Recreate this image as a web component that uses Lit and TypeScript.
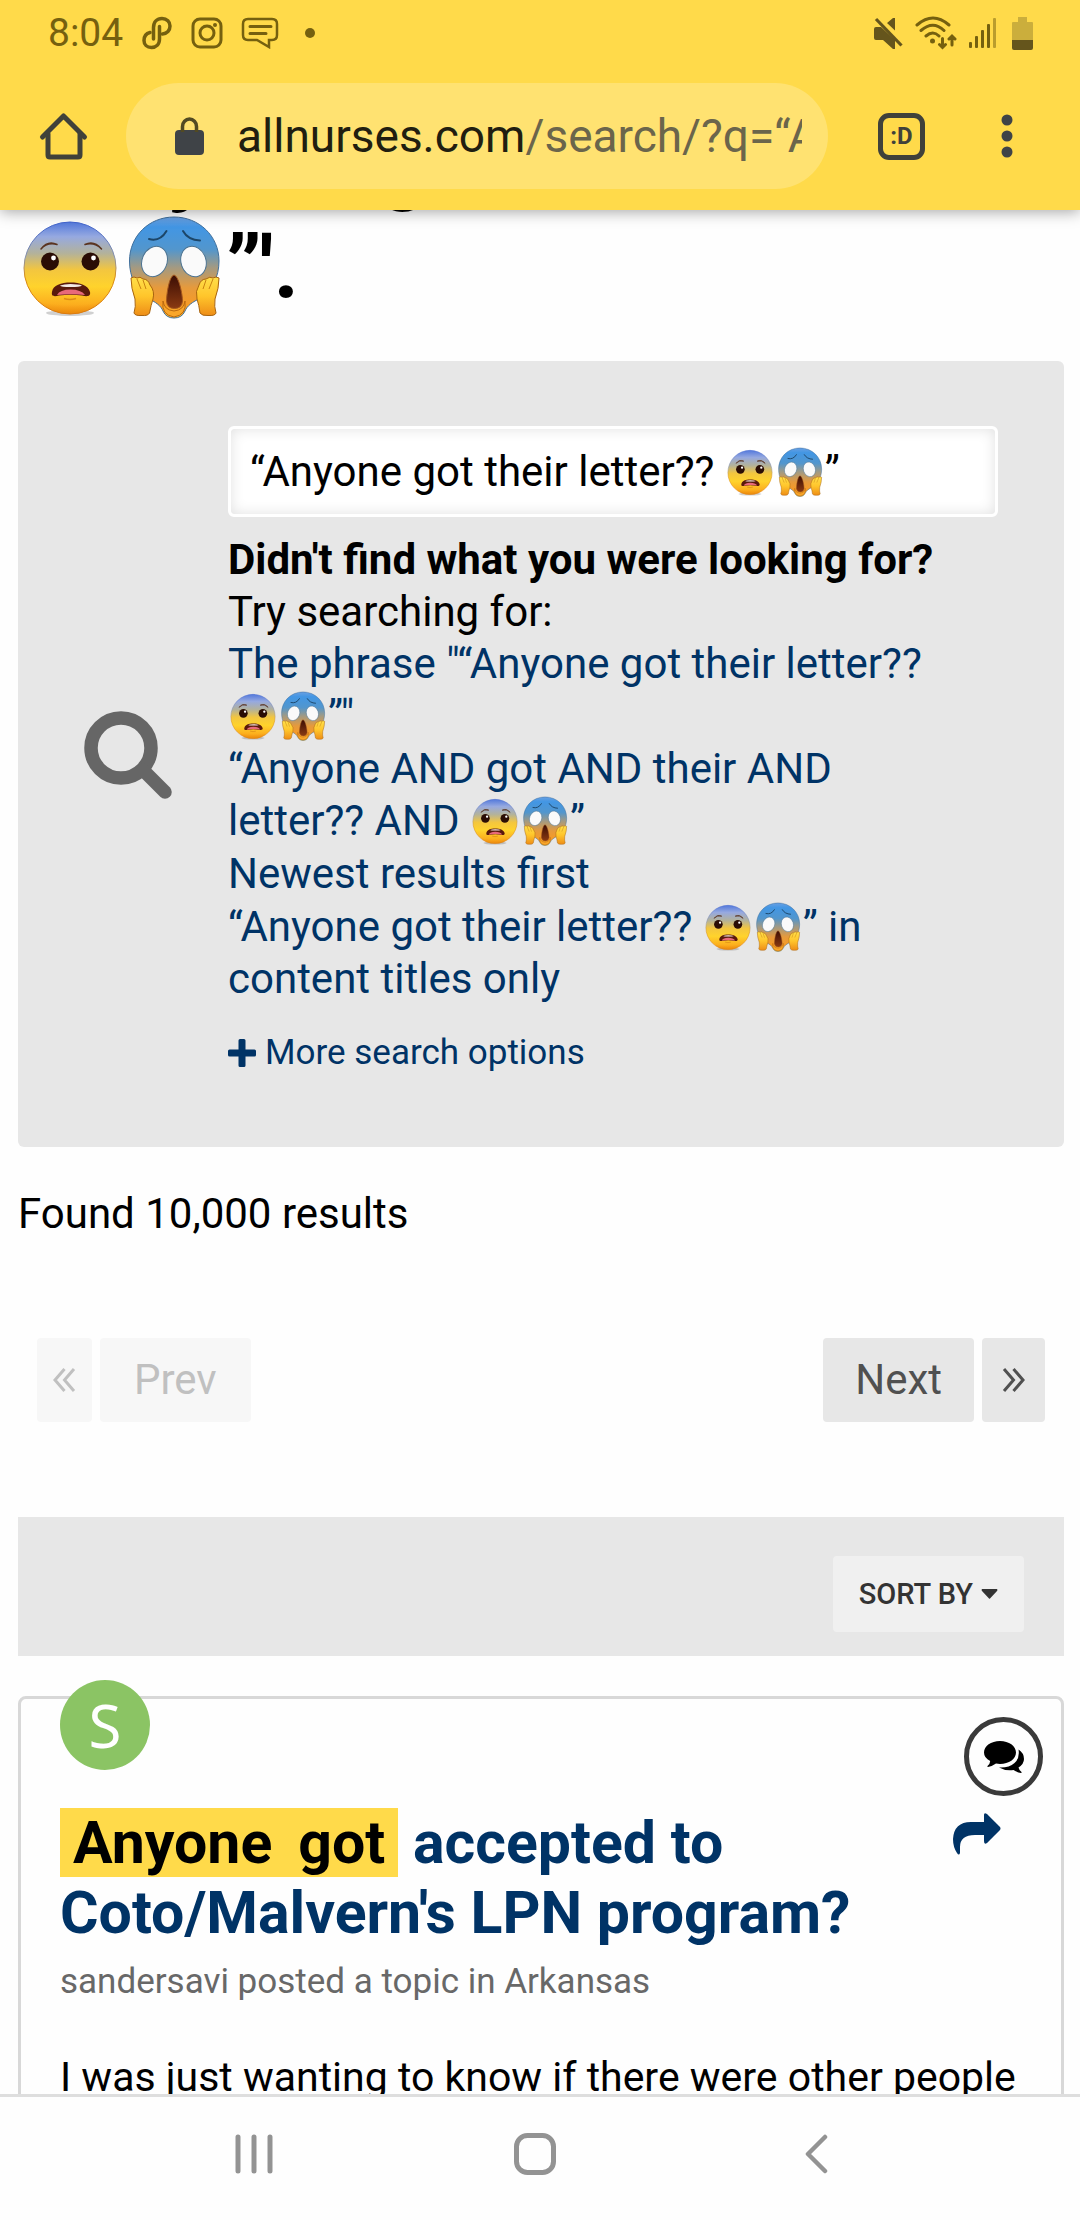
import { LitElement, html, css, svg } from "lit";
import { customElement, property, state } from "lit/decorators.js";

/** A face emoji drawn as vector art; sized by the host's width and height. */
@customElement("emoji-face")
class EmojiFace extends LitElement {
  @property() kind: "fearful" | "scream" = "fearful";

  static styles = css`
    :host {
      display: inline-block;
    }
    svg {
      display: block;
      width: 100%;
      height: 100%;
    }
  `;

  private fearful() {
    return svg`
      <defs>
        <linearGradient id="skin" x1="0" y1="0" x2="0" y2="1">
          <stop offset="0" stop-color="#5379dc" />
          <stop offset="0.16" stop-color="#96a9e0" />
          <stop offset="0.34" stop-color="#b3b29b" />
          <stop offset="0.52" stop-color="#f3c63f" />
          <stop offset="0.7" stop-color="#ffd32c" />
          <stop offset="1" stop-color="#fa9a16" />
        </linearGradient>
        <radialGradient id="rim" cx="0.5" cy="0" r="1">
          <stop offset="0.8" stop-color="#e07b00" stop-opacity="0" />
          <stop offset="1" stop-color="#d97800" stop-opacity="0.5" />
        </radialGradient>
        <linearGradient id="cool" x1="0" y1="0" x2="0" y2="1">
          <stop offset="0" stop-color="#3f63cf" />
          <stop offset="0.4" stop-color="#8a93a8" />
          <stop offset="0.6" stop-color="#d98b12" />
          <stop offset="1" stop-color="#d97a10" />
        </linearGradient>
      </defs>
      <ellipse cx="52" cy="98" rx="24" ry="3" fill="#000" opacity="0.18" />
      <circle cx="52" cy="53" r="46" fill="url(#skin)" />
      <path d="M6 53a46 46 0 0 0 92 0z" fill="url(#rim)" />
      <circle cx="52" cy="53" r="46" fill="none" stroke="url(#cool)" stroke-width="1" />
      <path d="M23 34Q29 27 39 29.500Q30 25 23 34z M83.500 34Q77 27 67 29.500Q76 25 83.500 34z"
        fill="#5a3420" stroke="#5a3420" stroke-width="1.500" stroke-linejoin="round" />
      <circle cx="32" cy="46.500" r="9" fill="#2a0d05" />
      <circle cx="72.500" cy="46.500" r="9" fill="#2a0d05" />
      <circle cx="35.500" cy="43" r="2.400" fill="#fff" />
      <circle cx="75.500" cy="43" r="2.400" fill="#fff" />
      <path d="M34 77C35 70 43 67.500 52.500 67.500S70 70 72 77C73 82 68 81.500 64 80.500Q53 79 41 80.500C37 81.500 33 82 34 77z" fill="#5a1a0c" />
      <path d="M42 70.500Q46 69 52.500 69Q60 69 64 70.500Q62 72 52.500 72Q43 72 42 70.500z" fill="#f3e9e4" />
      <path d="M39 80Q42 74.500 52.500 74.500Q63 74.500 67 80Q53 78.500 39 80z" fill="#e8697a" />
      <path d="M46 83.500Q52 85.500 58 83.500" fill="none" stroke="#dc8c16" stroke-width="1.500" />
    `;
  }

  private scream() {
    return svg`
      <defs>
        <linearGradient id="face" x1="0" y1="0" x2="0" y2="1">
          <stop offset="0" stop-color="#6aa0e2" />
          <stop offset="0.1" stop-color="#4296e4" />
          <stop offset="0.32" stop-color="#5296cd" />
          <stop offset="0.5" stop-color="#a39a82" />
          <stop offset="0.7" stop-color="#e69a3c" />
          <stop offset="0.88" stop-color="#f79b25" />
          <stop offset="1" stop-color="#ffc02e" />
        </linearGradient>
        <linearGradient id="hand" x1="0" y1="0" x2="0" y2="1">
          <stop offset="0" stop-color="#ffdf4a" />
          <stop offset="0.5" stop-color="#ffc52b" />
          <stop offset="1" stop-color="#ee8d17" />
        </linearGradient>
        <linearGradient id="mouth" x1="0" y1="0" x2="0" y2="1">
          <stop offset="0" stop-color="#3b0d04" />
          <stop offset="1" stop-color="#8a3a12" />
        </linearGradient>
      </defs>
      <path d="M52 2C27 2 7.500 21 7.500 46C7.500 62 14 75 25 83C34 87 39 91 41 96Q44 103 52 103Q60 103 63 96C65 91 70 87 79 83C90 75 97 62 97 46C97 21 77 2 52 2z"
        fill="url(#face)" stroke="#3f6f9c" stroke-width="1" />
      <path d="M41 86Q39 100 52 102Q65 100 63 86Q62 95 52 96Q42 95 41 86z" fill="#f9a62a" stroke="#b8670f" stroke-width="1" />
      <path d="M27 24Q38 27 44.500 16M61 16Q66 25 78 25.500" fill="none" stroke="#1c4669" stroke-width="2" stroke-linecap="round" />
      <ellipse cx="32.500" cy="46.500" rx="12.500" ry="15.500" transform="rotate(22 32.500 46.500)" fill="#fafafa" stroke="#4b7291" stroke-width="1" />
      <ellipse cx="71.500" cy="46.500" rx="12.500" ry="15.500" transform="rotate(-18 71.500 46.500)" fill="#fafafa" stroke="#4b7291" stroke-width="1" />
      <path d="M52 60C57 61 60.500 80 60.500 86Q60 93.500 52.500 93.500Q45 93.500 44.500 86C44.500 80 47 61 52 60z"
        fill="url(#mouth)" stroke="#a3571d" stroke-width="1" />
      <g fill="url(#hand)" stroke="#a8640f" stroke-width="1" stroke-linejoin="round">
        <path d="M9 63Q12 61 15 63Q18 61 21 64Q26 64 28 70Q33 76 31 84Q29 90 27.500 98Q26 101 20 100.500Q13 101 12 98Q14 92 13 84Q9 73 9 63z" />
        <path d="M97 63Q94 61 91 63Q88 61 84 64Q79 64 77 70Q73 76 75 84Q77 90 78 98Q80 101 86 100.500Q93 101 94 98Q92 92 93 84Q97 73 97 63z" />
      </g>
      <path d="M15 64L19 74M21 65L24 74M91 64L87 74M84 65L81 74" stroke="#c98212" stroke-width="1" fill="none" />
    `;
  }

  render() {
    return html`<svg viewBox="0 0 104 104" role="img" aria-label=${this.kind === "fearful" ? "😨" : "😱"}>
      ${this.kind === "fearful" ? this.fearful() : this.scream()}
    </svg>`;
  }
}

const faces = (size: "small" | "large" = "small") =>
  html`<span class="faces"><emoji-face class="emoji ${size}" kind="fearful"></emoji-face><emoji-face class="emoji ${size}" kind="scream"></emoji-face></span>`;

@customElement("app-root")
class AppRoot extends LitElement {
  @state() private query = "“Anyone got their letter?? 😨😱”";

  static styles = css`
    :host {
      --yellow: #ffda4a;
      --navy: #003366;
      --panel: #e7e7e7;
      --chrome: #40413a;
      display: flex;
      flex-direction: column;
      height: 100vh;
      overflow: hidden;
      background: #fefefe;
      color: #000;
      font-family: Roboto, "Liberation Sans", sans-serif;
      font-size: 42px;
      line-height: 52px;
    }
    * {
      box-sizing: border-box;
    }
    svg {
      display: block;
      flex: none;
    }
    h1,
    h2,
    p,
    ul {
      margin: 0;
      padding: 0;
    }
    a {
      color: var(--navy);
      text-decoration: none;
    }
    button {
      border: 0;
      padding: 0;
      background: none;
      font: inherit;
      color: inherit;
    }
    .faces {
      white-space: nowrap;
    }
    .emoji.small {
      width: 50px;
      height: 50px;
      margin: -4px 0;
      vertical-align: -7px;
    }
    .emoji.large {
      width: 104px;
      height: 104px;
      margin: -6px 0;
      vertical-align: -15px;
    }

    /* Browser chrome */
    .chrome {
      position: relative;
      z-index: 1;
      flex: none;
      background: var(--yellow);
      box-shadow: 0 2px 14px rgba(0, 0, 0, 0.35);
    }
    .status {
      display: flex;
      align-items: center;
      justify-content: space-between;
      height: 66px;
      padding: 0 47px 0 48px;
      color: #75600f;
      font-size: 39px;
    }
    .status-group {
      display: flex;
      align-items: center;
    }
    .status-left {
      gap: 18px;
    }
    .status-left .dot {
      margin-left: 8px;
    }
    .status-right {
      gap: 12px;
    }
    .status-right .battery {
      margin-left: 4px;
    }
    .toolbar {
      display: flex;
      align-items: center;
      height: 144px;
      padding: 0 67px 4px 36px;
      color: var(--chrome);
    }
    .address {
      display: flex;
      align-items: center;
      flex: 1;
      min-width: 0;
      height: 106px;
      margin: 0 50px 0 36px;
      padding: 0 26px 0 49px;
      gap: 33px;
      border-radius: 53px;
      background: #ffe271;
    }
    .url {
      flex: 1;
      overflow: hidden;
      white-space: nowrap;
      font-size: 46px;
      line-height: 60px;
      color: #6b654b;
    }
    .host-name {
      color: #211e10;
    }
    .tabs {
      display: grid;
      place-items: center;
      width: 47px;
      height: 47px;
      margin-right: 76px;
      border: 5px solid var(--chrome);
      border-radius: 11px;
      font-size: 24px;
      line-height: 24px;
      font-weight: 700;
    }

    /* Page */
    .page {
      flex: 1;
      min-height: 0;
      overflow: hidden;
      padding: 0 16px 0 18px;
    }
    .heading {
      margin-top: -98px;
      font-size: 88px;
      line-height: 104px;
      font-weight: 700;
      white-space: nowrap;
    }
    .search {
      display: flex;
      align-items: center;
      gap: 56px;
      margin-top: 41px;
      padding: 65px 66px 72px;
      border-radius: 6px;
      background: var(--panel);
    }
    .search-icon {
      margin-top: 8px;
    }
    .search-body {
      flex: 1;
      min-width: 0;
    }
    .field {
      display: grid;
      height: 91px;
      margin-bottom: 17px;
    }
    .field > * {
      grid-area: 1 / 1;
      min-width: 0;
      padding: 0 19px;
      border: 3px solid #fff;
      border-radius: 6px;
      font: inherit;
    }
    .field input {
      width: 100%;
      background: #fff;
      box-shadow: inset 0 0 14px rgba(0, 0, 0, 0.12);
      color: transparent;
      caret-color: #000;
      outline: none;
    }
    .mirror {
      align-self: center;
      border-color: transparent;
      overflow: hidden;
      white-space: pre;
      pointer-events: none;
    }
    .suggestions {
      display: grid;
      gap: 1px;
      padding-right: 40px;
      list-style: none;
    }
    .more {
      display: flex;
      align-items: center;
      gap: 9px;
      margin-top: 26px;
      font-size: 35px;
      line-height: 44px;
    }
    .found {
      margin-top: 41px;
    }
    .pager {
      display: flex;
      justify-content: space-between;
      margin: 98px 19px 0;
    }
    .pager-group {
      display: flex;
      gap: 8px;
    }
    .page-button {
      display: grid;
      place-items: center;
      height: 84px;
      padding: 0 32px;
      border-radius: 4px;
      background: var(--panel);
      color: #505050;
    }
    .page-button.prev {
      padding: 0 34px;
    }
    .page-button.edge {
      padding: 0 19px;
    }
    .page-button.first {
      padding: 0 16px;
    }
    .page-button:disabled {
      background: #f7f7f7;
      color: #c0c0c0;
    }
    .sort-bar {
      display: flex;
      justify-content: flex-end;
      margin-top: 95px;
      padding: 39px 40px 24px;
      background: var(--panel);
    }
    .sort {
      display: flex;
      align-items: center;
      gap: 8px;
      height: 76px;
      padding: 0 26px;
      border-radius: 4px;
      background: #f0f0f0;
      color: #333;
      font-size: 29px;
      font-weight: 500;
    }
    .card {
      margin-top: 40px;
      padding-bottom: 60px;
      border: 3px solid #d8d8d8;
      border-radius: 8px;
    }
    .card-head {
      display: flex;
      justify-content: space-between;
      padding: 0 18px 0 39px;
    }
    .avatar {
      display: grid;
      place-items: center;
      width: 90px;
      height: 90px;
      margin: -19px 0 38px;
      border-radius: 50%;
      background: #8bc464;
      color: #fff;
      font-family: "Noto Sans", sans-serif;
      font-size: 60px;
    }
    .title {
      font-size: 59px;
      line-height: 70px;
      font-weight: 700;
    }
    .title mark {
      padding: 0 13px;
      background: var(--yellow);
      color: #000;
    }
    .meta {
      margin-top: 12px;
      font-size: 35px;
      line-height: 44px;
      color: #686868;
    }
    .actions {
      display: flex;
      flex-direction: column;
      flex: none;
      width: 90px;
      padding-top: 18px;
      gap: 17px;
    }
    .kind {
      display: grid;
      place-items: center;
      align-self: flex-end;
      width: 79px;
      height: 79px;
      border: 5px solid #3a3a3a;
      border-radius: 50%;
      color: #000;
    }
    .excerpt {
      margin-top: 47px;
      padding: 0 24px 0 39px;
      font-size: 41px;
    }

    /* System navigation */
    .system {
      display: flex;
      justify-content: center;
      flex: none;
      height: 126px;
      padding: 0 10px 9px 0;
      border-top: 3px solid #dedede;
      color: #939393;
    }
    .system button {
      display: grid;
      place-items: center;
      width: 281px;
    }
  `;

  private statusBar() {
    return html`<div class="status">
      <div class="status-group status-left">
        <span>8:04</span>
        <svg width="32" height="34" viewBox="0 0 32 34" fill="none" stroke="currentColor" stroke-width="3.500" stroke-linecap="round">
          <path d="M12.500 23V11.500C12.500 6 16 2.500 21 2.500C26 2.500 29 6 29 10C29 14.500 26 17.500 21.500 18" />
          <path d="M18.500 10.500V23C18.500 28.500 15 31.500 10.500 31.500C6 31.500 3 28.500 3 24.500C3 20 5 17.500 9 16.500" />
        </svg>
        <svg width="32" height="32" viewBox="0 0 32 32" fill="none" stroke="currentColor" stroke-width="3">
          <rect x="2" y="2" width="28" height="28" rx="7" />
          <circle cx="16" cy="16" r="7" />
          <circle cx="24" cy="8" r="2" fill="currentColor" stroke="none" />
        </svg>
        <svg width="38" height="32" viewBox="0 0 38 32" fill="none" stroke="currentColor" stroke-width="2.500">
          <path d="M7 2H31Q36 2 36 7V18Q36 23 31 23H28V30L16 23H7Q2 23 2 18V7Q2 2 7 2Z" />
          <path d="M9 9.500H30M9 16.500H25" stroke-width="3" stroke-linecap="round" />
        </svg>
        <svg class="dot" width="10" height="10" viewBox="0 0 10 10"><circle cx="5" cy="5" r="5" fill="currentColor" /></svg>
      </div>
      <div class="status-group status-right">
        <svg width="29" height="32" viewBox="0 0 29 32" fill="#65551c">
          <path d="M0 12Q0 10 2 10H7L21 23V32H19L9 23H2Q0 23 0 21Z M13 6L19 1H21V13.500Z" />
          <path d="M2 2L27.500 28.500" stroke="#65551c" stroke-width="3.200" />
        </svg>
        <svg width="42" height="34" viewBox="0 0 42 34" fill="none" stroke="currentColor" stroke-width="3" stroke-linecap="round">
          <path d="M2 9Q18 -5 34 9M6 14.500Q18 4 29 14.500M11 20Q18 14 24 20" />
          <circle cx="17.500" cy="25" r="2.500" fill="currentColor" stroke="none" />
          <path d="M27.500 22.500V31M24.500 28.500L27.500 31.500L30.500 28.500M37 29V20.500M34 23L37 20L40 23" />
        </svg>
        <svg width="27" height="32" viewBox="0 0 27 32" fill="currentColor">
          <rect x="0" y="25" width="3" height="6" rx="1" />
          <rect x="6" y="19" width="3" height="12" rx="1" />
          <rect x="12" y="13" width="3" height="18" rx="1" />
          <rect x="18" y="7" width="3" height="24" rx="1" />
          <rect x="24" y="1" width="3" height="30" rx="1" opacity="0.5" />
        </svg>
        <svg class="battery" width="21" height="33" viewBox="0 0 21 33">
          <path d="M6 0H15V5H20Q21 5 21 6V23H0V6Q0 5 1 5H6Z" fill="#cbae3c" />
          <path d="M0 23H21V31Q21 33 19 33H2Q0 33 0 31Z" fill="#65551c" />
        </svg>
      </div>
    </div>`;
  }

  private toolbar() {
    return html`<div class="toolbar">
      <button aria-label="Home">
        <svg width="54" height="50" viewBox="0 0 54 50" fill="none" stroke="currentColor" stroke-width="5" stroke-linecap="round" stroke-linejoin="round">
          <path d="M12 23V44Q12 46 14 46H42Q44 46 44 44V23" />
          <path d="M6.500 26L27.500 5L48.500 26" />
        </svg>
      </button>
      <div class="address">
        <svg width="29" height="38" viewBox="0 0 29 38">
          <rect y="13" width="29" height="25" rx="4" fill="#3f4347" />
          <path d="M7.500 15V9.500A7 7.500 0 0 1 21.500 9.500V15" fill="none" stroke="#524a22" stroke-width="3.500" />
        </svg>
        <div class="url"><span class="host-name">allnurses.com</span>/search/?q=“Anyone</div>
      </div>
      <button class="tabs" aria-label="Tabs">:D</button>
      <button aria-label="Menu">
        <svg width="12" height="44" viewBox="0 0 12 44" fill="#3f4347">
          <circle cx="6" cy="6" r="5.500" /><circle cx="6" cy="22" r="5.500" /><circle cx="6" cy="38" r="5.500" />
        </svg>
      </button>
    </div>`;
  }

  private searchPanel() {
    return html`<section class="search">
      <svg class="search-icon" width="88" height="88" viewBox="0 0 88 88" fill="none" stroke="#666" stroke-width="13.500" stroke-linecap="round">
        <circle cx="37" cy="37" r="30" />
        <path d="M59 59L81 81" />
      </svg>
      <div class="search-body">
        <div class="field">
          <input
            type="search"
            aria-label="Search"
            .value=${this.query}
            @input=${(e: Event) => (this.query = (e.target as HTMLInputElement).value)}
          />
          <div class="mirror" aria-hidden="true">${this.decorate(this.query)}</div>
        </div>
        <p><strong>Didn't find what you were looking for?</strong></p>
        <p>Try searching for:</p>
        <ul class="suggestions">
          <li><a href="#phrase">The phrase "“Anyone got their letter?? ${faces()}”"</a></li>
          <li><a href="#all">“Anyone AND got AND their AND letter?? AND ${faces()}”</a></li>
          <li><a href="#newest">Newest results first</a></li>
          <li><a href="#titles">“Anyone got their letter?? ${faces()}” in content titles only</a></li>
        </ul>
        <a class="more" href="#options">
          <svg width="28" height="28" viewBox="0 0 28 28" fill="currentColor">
            <path d="M12 0H16Q17.500 0 17.500 1.500V10.500H26.500Q28 10.500 28 12V16Q28 17.500 26.500 17.500H17.500V26.500Q17.500 28 16 28H12Q10.500 28 10.500 26.500V17.500H1.500Q0 17.500 0 16V12Q0 10.500 1.500 10.500H10.500V1.500Q10.500 0 12 0Z" />
          </svg>
          More search options
        </a>
      </div>
    </section>`;
  }

  /** Replaces emoji characters by their drawn faces. */
  private decorate(text: string) {
    return Array.from(text).map((ch) =>
      ch === "😨"
        ? html`<emoji-face class="emoji small" kind="fearful"></emoji-face>`
        : ch === "😱"
          ? html`<emoji-face class="emoji small" kind="scream"></emoji-face>`
          : ch
    );
  }

  private pager() {
    return html`<nav class="pager" aria-label="Pages">
      <div class="pager-group">
        <button class="page-button first" disabled aria-label="First page">
          <svg width="23" height="24" viewBox="0 0 23 24" fill="none" stroke="currentColor" stroke-width="3">
            <path d="M11.500 1L2 12L11.500 23M21 1L11.500 12L21 23" />
          </svg>
        </button>
        <button class="page-button prev" disabled>Prev</button>
      </div>
      <div class="pager-group">
        <button class="page-button next">Next</button>
        <button class="page-button edge" aria-label="Last page">
          <svg width="25" height="24" viewBox="0 0 25 24" fill="none" stroke="currentColor" stroke-width="3">
            <path d="M3 1L12.500 12L3 23M12.500 1L22 12L12.500 23" />
          </svg>
        </button>
      </div>
    </nav>`;
  }

  private result() {
    return html`<article class="card">
      <header class="card-head">
        <div>
          <div class="avatar">S</div>
          <h2 class="title"><a href="#topic"><mark>Anyone</mark><mark>got</mark> accepted to Coto/Malvern's LPN program?</a></h2>
          <p class="meta">sandersavi posted a topic in Arkansas</p>
        </div>
        <div class="actions">
          <div class="kind">
            <svg width="40" height="32" viewBox="0 0 40 32" fill="currentColor">
              <path d="M16 0C25 0 32 5 32 11.500S25 23 16 23Q14 23 12 22.600Q8 25.500 4 26Q3 26 3.500 25Q6 23 6.200 20Q0 17 0 11.500C0 5 7 0 16 0Z" />
              <path d="M34.500 8.500Q40 12 40 18Q40 23 34.500 26.500Q35 29 37.500 31Q38 32 37 32Q33 31.500 29.500 29Q21 30 15 26.500Q25 27 30.500 22Q36 17 34.500 8.500Z" />
            </svg>
          </div>
          <a href="#share" aria-label="Go to topic">
            <svg width="48" height="42" viewBox="0 0 48 42" fill="currentColor">
              <path d="M31 2Q31 -1 34 1L47 14Q48 15.500 47 17L34 30Q31 32 31 28V22H22Q7 22 7 34V40Q6 43 4 40Q0 34 0 26Q1 9 18 9H31Z" />
            </svg>
          </a>
        </div>
      </header>
      <p class="excerpt">I was just wanting to know if there were other people</p>
    </article>`;
  }

  render() {
    return html`
      <header class="chrome">${this.statusBar()}${this.toolbar()}</header>
      <main class="page">
        <h1 class="heading">'“Anyone got their letter??<br />${faces("large")}”'.</h1>
        ${this.searchPanel()}
        <p class="found">Found 10,000 results</p>
        ${this.pager()}
        <div class="sort-bar">
          <button class="sort">
            SORT BY
            <svg width="17" height="10" viewBox="0 0 17 10" fill="currentColor"><path d="M1 0H16Q17 1 16 2L9 9.500Q8.500 10 8 9.500L1 2Q0 1 1 0Z" /></svg>
          </button>
        </div>
        ${this.result()}
      </main>
      <nav class="system" aria-label="System">
        <button aria-label="Recent apps">
          <svg width="38" height="40" viewBox="0 0 38 40" fill="none" stroke="currentColor" stroke-width="5" stroke-linecap="round">
            <path d="M3 3V37M19 3V37M35 3V37" />
          </svg>
        </button>
        <button aria-label="Home screen">
          <svg width="42" height="42" viewBox="0 0 42 42" fill="none" stroke="currentColor" stroke-width="5">
            <rect x="2.500" y="2.500" width="37" height="37" rx="11" />
          </svg>
        </button>
        <button aria-label="Back">
          <svg width="24" height="40" viewBox="0 0 24 40" fill="none" stroke="currentColor" stroke-width="4.500" stroke-linecap="round" stroke-linejoin="round">
            <path d="M21 3L4 20L21 37" />
          </svg>
        </button>
      </nav>
    `;
  }
}
